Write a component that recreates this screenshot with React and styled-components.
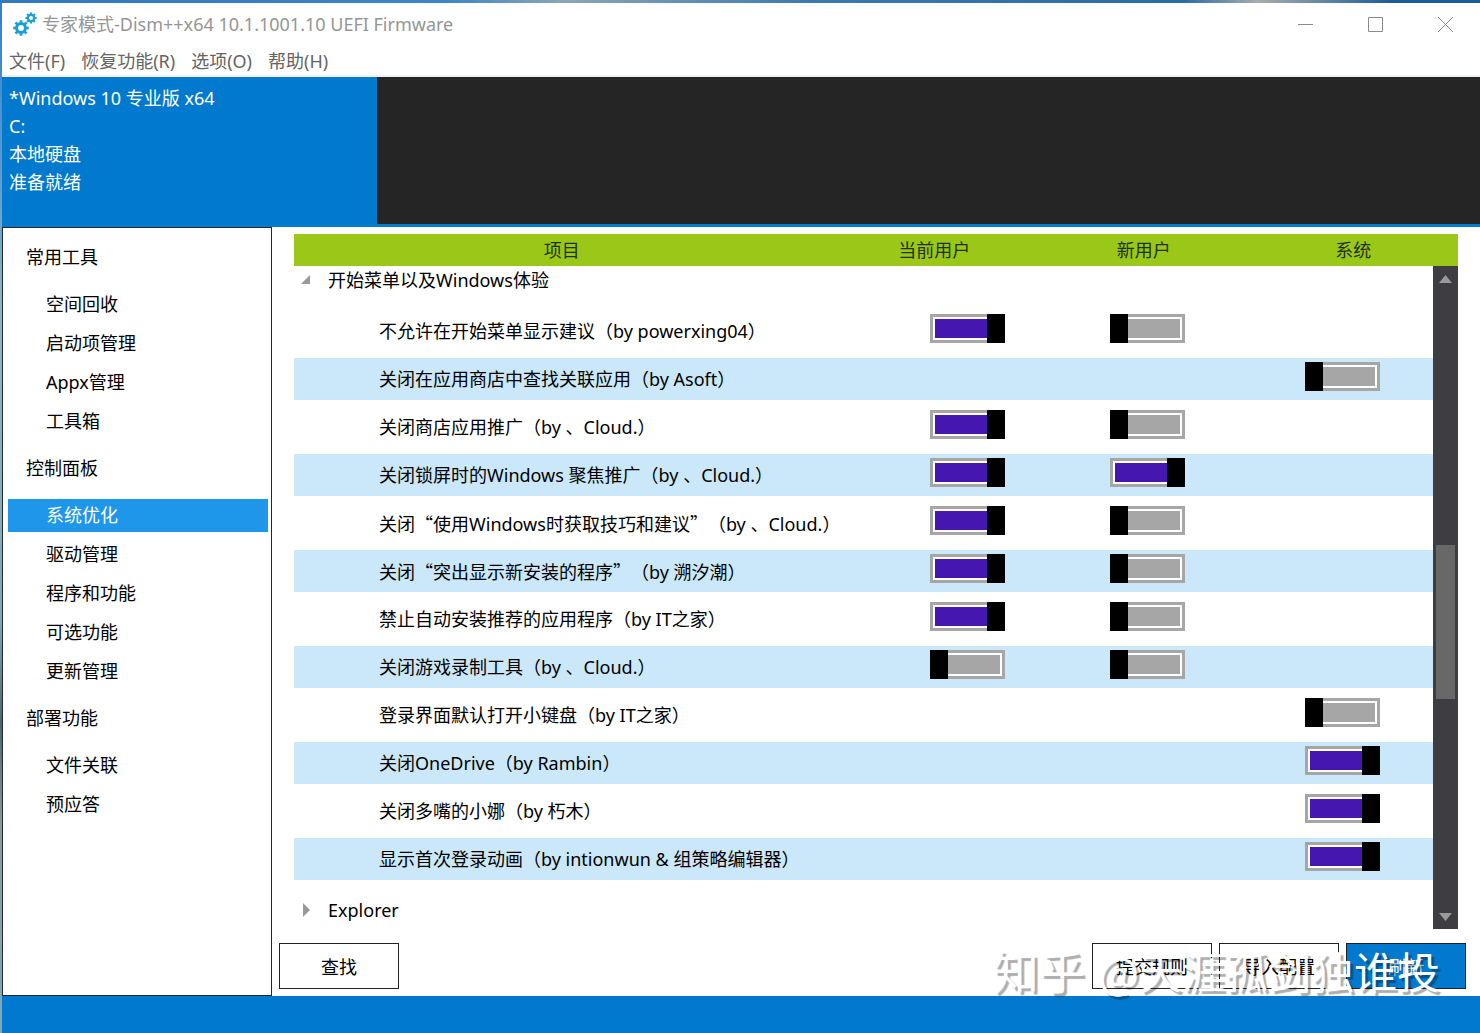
import React, { useState } from "react";
import styled, { createGlobalStyle } from "styled-components";

const uiFont = '"Noto Sans", "Noto Sans CJK SC", sans-serif';
const cjkFont = '"Noto Sans CJK SC", sans-serif';

const GlobalStyle = createGlobalStyle`
  *, *::before, *::after { box-sizing: border-box; }
  body { margin: 0; font-family: ${uiFont}; font-size: 18px; color: #000; text-spacing-trim: space-all; }
  button, input { font: inherit; color: inherit; }
`;

const Desktop = styled.div`
  display: flex;
  flex-direction: column;
  height: 100vh;
  padding: 3px 0 0 2px;
  background:
    linear-gradient(180deg, #2f7fd0 0, #6fa6cc 22%, #8fb6bd 30%, #7fa9b3 60%, #50656c 70%, #8d9a97 80%, #7eaab8 100%) left / 2px 100% no-repeat,
    linear-gradient(90deg, #3078c0 0, #3d84c8 30%, #8ba6b6 38%, #3b78b0 55%, #2a6ca8 80%, #a9adab 85%, #1b5c9c 94%) top / 100% 3px no-repeat;
`;

const Window = styled.div`
  display: flex;
  flex: 1;
  flex-direction: column;
  min-height: 0;
  background: #fff;
`;

const TitleBar = styled.header`
  display: flex;
  align-items: center;
  height: 42px;
  padding-left: 10px;
  color: #959595;
`;

const Title = styled.h1`
  flex: 1;
  margin: 0 0 0 4px;
  font-size: 18px;
  font-weight: 400;
  line-height: 28px;
`;

const WindowButton = styled.button`
  display: grid;
  place-items: center;
  width: 70px;
  height: 42px;
  padding: 0;
  border: 0;
  background: none;
`;

const MenuBar = styled.nav`
  display: flex;
  align-items: center;
  gap: 16px;
  height: 32px;
  padding: 2px 7px 0;
  border-bottom: 2px solid #eff2f3;
`;

const MenuItem = styled.button`
  padding: 0;
  border: 0;
  background: none;
  color: #646464;
  line-height: 28px;
`;

const ImageStrip = styled.section`
  display: flex;
  height: 150px;
  border-bottom: 3px solid #0079ce;
  background: #252525;
`;

const ImageCard = styled.button`
  display: flex;
  flex-direction: column;
  justify-content: flex-start;
  width: 375px;
  padding: 7px;
  border: 0;
  background: #0079ce;
  color: #fff;
  line-height: 28px;
  text-align: left;
`;

const Workspace = styled.div`
  display: flex;
  flex: 1;
  min-height: 0;
`;

const Sidebar = styled.nav`
  display: flex;
  flex: none;
  flex-direction: column;
  gap: 14px;
  width: 270px;
  padding: 13px 3px 0 5px;
  border: 1px solid #222a30;
`;

const SideSection = styled.section`
  display: flex;
  flex-direction: column;
  gap: 14px;
`;

const SideHeading = styled.h2`
  margin: 0;
  padding-left: 18px;
  font-size: 18px;
  font-weight: 400;
  line-height: 33px;
`;

const SideList = styled.ul`
  display: flex;
  flex-direction: column;
  gap: 6px;
  margin: 0;
  padding: 0;
  list-style: none;
`;

const SideLink = styled.a`
  display: block;
  padding-left: 38px;
  background: ${(p) => (p.$active ? "#1e97ea" : "transparent")};
  color: ${(p) => (p.$active ? "#fff" : "#000")};
  line-height: 33px;
  text-decoration: none;
`;

const Main = styled.main`
  display: flex;
  flex: 1;
  flex-direction: column;
  min-width: 0;
  padding-top: 7px;
`;

const Rules = styled.div`
  display: flex;
  flex: 1;
  flex-direction: column;
  min-height: 0;
  margin: 0 22px;
`;

const HeadTable = styled.table`
  width: 100%;
  table-layout: fixed;
  border-collapse: collapse;
  background: #9bc818;
`;

const HeadCell = styled.th`
  width: ${(p) => (p.$wide ? "46%" : "18%")};
  height: 32px;
  padding: 0;
  color: #22300a;
  font-weight: 400;
  line-height: 28px;
`;

const ScrollArea = styled.div`
  display: flex;
  flex: 1;
  min-height: 0;
`;

const Viewport = styled.div`
  flex: 1;
  min-width: 0;
  overflow: hidden;
`;

const BodyTable = styled.table`
  width: 100%;
  table-layout: fixed;
  border-spacing: 0 6px;
`;

const NameCol = styled.col``;
const ToggleCol = styled.col`
  width: ${(p) => p.$width}px;
`;

const GroupCell = styled.td`
  height: ${(p) => (p.$open ? 32 : 48)}px;
  padding: 0 0 ${(p) => (p.$open ? 16 : 0)}px;
`;

const GroupButton = styled.button`
  display: flex;
  align-items: center;
  gap: 16px;
  height: 16px;
  padding: 0 6px;
  border: 0;
  background: none;
  line-height: 16px;
`;

const RuleRow = styled.tr`
  background: ${(p) => (p.$striped ? "#cbe8fa" : "#fff")};
`;

const NameCell = styled.th`
  height: 42px;
  padding: 0 0 0 85px;
  font-weight: 400;
  line-height: 28px;
  text-align: left;
  white-space: nowrap;
`;

const ToggleCell = styled.td`
  height: 42px;
  padding: 4px 0 0;
  vertical-align: top;
`;

const Switch = styled.input.attrs({ type: "checkbox", role: "switch" })`
  display: block;
  appearance: none;
  width: 75px;
  height: 29px;
  margin: 0;
  padding: 2px;
  border: 3px solid transparent;
  background:
    linear-gradient(#000, #000) left / 18px 100% no-repeat border-box,
    linear-gradient(#a6a6a6, #a6a6a6) content-box,
    linear-gradient(#fff, #fff) padding-box,
    linear-gradient(#a6a6a6, #a6a6a6) border-box;

  &:checked {
    background:
      linear-gradient(#000, #000) right / 18px 100% no-repeat border-box,
      linear-gradient(#4617b0, #4617b0) content-box,
      linear-gradient(#fff, #fff) padding-box,
      linear-gradient(#a6a6a6, #a6a6a6) border-box;
  }
`;

const FullWidth = styled.span`
  font-family: ${cjkFont};
`;

const ScrollBar = styled.div`
  display: grid;
  grid-template-rows: 25px 254fr 154fr 205fr 25px;
  justify-items: center;
  width: 25px;
  background: #3e3d42;
`;

const ScrollButton = styled.button`
  display: grid;
  grid-row: ${(p) => p.$row};
  place-items: center;
  width: 25px;
  height: 25px;
  padding: 0;
  border: 0;
  background: none;
`;

const ScrollThumb = styled.div`
  grid-row: 3;
  width: 19px;
  background: #686868;
`;

const Actions = styled.div`
  display: flex;
  gap: 7px;
  padding: 14px 14px 7px 7px;
`;

const ActionButton = styled.button`
  width: 120px;
  height: 46px;
  margin-right: ${(p) => (p.$pushRest ? "auto" : 0)};
  padding: 0;
  border: 1px solid #222;
  background: ${(p) => (p.$primary ? "#0079ce" : "#fff")};
  color: ${(p) => (p.$primary ? "#fff" : "#000")};
`;

const StatusBar = styled.footer`
  flex: none;
  height: 37px;
  background: #0079ce;
`;

const Watermark = styled.div`
  position: absolute;
  right: 40px;
  bottom: 32px;
  color: #fff;
  font-family: ${cjkFont};
  font-size: 43px;
  line-height: 62px;
  text-shadow: 3px 3px 1px rgba(0, 0, 0, 0.32);
  white-space: nowrap;
  pointer-events: none;
`;

const Brand = styled.span`
  margin-right: 4px;
  font-size: 46px;
`;

function Gear({ cx, cy, r, band, tooth }) {
  return (
    <g stroke="#1a9fd9" fill="none">
      <circle cx={cx} cy={cy} r={r} strokeWidth={band} />
      {[0, 45, 90, 135, 180, 225, 270, 315].map((a) => (
        <line
          key={a}
          x1={cx}
          y1={cy - r}
          x2={cx}
          y2={cy - r - band / 2 - tooth}
          strokeWidth={tooth + 0.8}
          transform={`rotate(${a} ${cx} ${cy})`}
        />
      ))}
    </g>
  );
}

function AppIcon() {
  return (
    <svg width="26" height="26" viewBox="0 0 26 26" aria-hidden="true">
      <Gear cx={9} cy={17} r={4.4} band={3} tooth={1.9} />
      <Gear cx={19} cy={7} r={3.1} band={2.1} tooth={1.4} />
    </svg>
  );
}

const glyphs = {
  最小化: <path d="M0 7.5h15" />,
  最大化: <path d="M.5 .5h14v14h-14z" />,
  关闭: <path d="M0 0l15 15M15 0L0 15" />,
};

const menus = ["文件(F)", "恢复功能(R)", "选项(O)", "帮助(H)"];

const sections = [
  ["常用工具", ["空间回收", "启动项管理", "Appx管理", "工具箱"]],
  ["控制面板", ["系统优化", "驱动管理", "程序和功能", "可选功能", "更新管理"]],
  ["部署功能", ["文件关联", "预应答"]],
];

const columns = ["当前用户", "新用户", "系统"];

const rules = [
  ["不允许在开始菜单显示建议（by powerxing04）", [true, false, null]],
  ["关闭在应用商店中查找关联应用（by Asoft）", [null, null, false]],
  ["关闭商店应用推广（by 、Cloud.）", [true, false, null]],
  ["关闭锁屏时的Windows 聚焦推广（by 、Cloud.）", [true, true, null]],
  ["关闭“使用Windows时获取技巧和建议”（by 、Cloud.）", [true, false, null]],
  ["关闭“突出显示新安装的程序”（by 溯汐潮）", [true, false, null]],
  ["禁止自动安装推荐的应用程序（by IT之家）", [true, false, null]],
  ["关闭游戏录制工具（by 、Cloud.）", [false, false, null]],
  ["登录界面默认打开小键盘（by IT之家）", [null, null, false]],
  ["关闭OneDrive（by Rambin）", [null, null, true]],
  ["关闭多嘴的小娜（by 朽木）", [null, null, true]],
  ["显示首次登录动画（by intionwun & 组策略编辑器）", [null, null, true]],
];

// Curly quotes take a full em in Chinese text, so they come from the CJK family.
function RuleName({ text }) {
  return text
    .split(/([“”])/)
    .map((part, i) => (i % 2 ? <FullWidth key={i}>{part}</FullWidth> : part));
}

export default function App() {
  const [values, setValues] = useState(() => rules.map(([, v]) => v));
  const toggle = (row, col) =>
    setValues((all) =>
      all.map((v, r) => (r === row ? v.map((x, c) => (c === col ? !x : x)) : v))
    );

  return (
    <Desktop>
      <GlobalStyle />
      <Window>
        <TitleBar>
          <AppIcon />
          <Title>专家模式-Dism++x64 10.1.1001.10 UEFI Firmware</Title>
          {Object.entries(glyphs).map(([name, shape]) => (
            <WindowButton key={name} aria-label={name}>
              <svg width="15" height="15" fill="none" stroke="#8a8a8a">
                {shape}
              </svg>
            </WindowButton>
          ))}
        </TitleBar>
        <MenuBar>
          {menus.map((m) => (
            <MenuItem key={m}>{m}</MenuItem>
          ))}
        </MenuBar>
        <ImageStrip>
          <ImageCard>
            <span>*Windows 10 专业版 x64</span>
            <span>C:</span>
            <span>本地硬盘</span>
            <span>准备就绪</span>
          </ImageCard>
        </ImageStrip>
        <Workspace>
          <Sidebar>
            {sections.map(([heading, items]) => (
              <SideSection key={heading}>
                <SideHeading>{heading}</SideHeading>
                <SideList>
                  {items.map((item) => (
                    <li key={item}>
                      <SideLink href="#" $active={item === "系统优化"}>
                        {item}
                      </SideLink>
                    </li>
                  ))}
                </SideList>
              </SideSection>
            ))}
          </Sidebar>
          <Main>
            <Rules>
              <HeadTable>
                <thead>
                  <tr>
                    <HeadCell $wide>项目</HeadCell>
                    {columns.map((c) => (
                      <HeadCell key={c}>{c}</HeadCell>
                    ))}
                  </tr>
                </thead>
              </HeadTable>
              <ScrollArea>
                <Viewport>
                  <BodyTable>
                    <colgroup>
                      <NameCol />
                      <ToggleCol $width={180} />
                      <ToggleCol $width={195} />
                      <ToggleCol $width={128} />
                    </colgroup>
                    <tbody>
                      <tr>
                        <GroupCell colSpan={4} $open>
                          <GroupButton aria-expanded="true">
                            <svg width="12" height="12" aria-hidden="true">
                              <path d="M10 1v9H1z" fill="#999" />
                            </svg>
                            开始菜单以及Windows体验
                          </GroupButton>
                        </GroupCell>
                      </tr>
                      {rules.map(([name], r) => (
                        <RuleRow key={name} $striped={r % 2 === 1}>
                          <NameCell scope="row">
                            <RuleName text={name} />
                          </NameCell>
                          {values[r].map((v, c) => (
                            <ToggleCell key={columns[c]}>
                              {v !== null && (
                                <Switch
                                  aria-label={`${name} ${columns[c]}`}
                                  checked={v}
                                  onChange={() => toggle(r, c)}
                                />
                              )}
                            </ToggleCell>
                          ))}
                        </RuleRow>
                      ))}
                      <tr>
                        <GroupCell colSpan={4}>
                          <GroupButton aria-expanded="false">
                            <svg width="12" height="14" aria-hidden="true">
                              <path d="M3 0v14l7-7z" fill="#999" />
                            </svg>
                            Explorer
                          </GroupButton>
                        </GroupCell>
                      </tr>
                    </tbody>
                  </BodyTable>
                </Viewport>
                <ScrollBar>
                  <ScrollButton aria-label="向上滚动" $row={1}>
                    <svg width="13" height="8">
                      <path d="M0 8L6.500 0 13 8z" fill="#999" />
                    </svg>
                  </ScrollButton>
                  <ScrollThumb />
                  <ScrollButton aria-label="向下滚动" $row={5}>
                    <svg width="13" height="8">
                      <path d="M0 0h13L6.500 8z" fill="#999" />
                    </svg>
                  </ScrollButton>
                </ScrollBar>
              </ScrollArea>
            </Rules>
            <Actions>
              <ActionButton $pushRest>查找</ActionButton>
              <ActionButton>提交规则</ActionButton>
              <ActionButton>导入配置</ActionButton>
              <ActionButton $primary>刷新</ActionButton>
            </Actions>
          </Main>
        </Workspace>
        <StatusBar />
      </Window>
      <Watermark>
        <Brand>知乎</Brand> @天涯孤剑独谁投
      </Watermark>
    </Desktop>
  );
}
